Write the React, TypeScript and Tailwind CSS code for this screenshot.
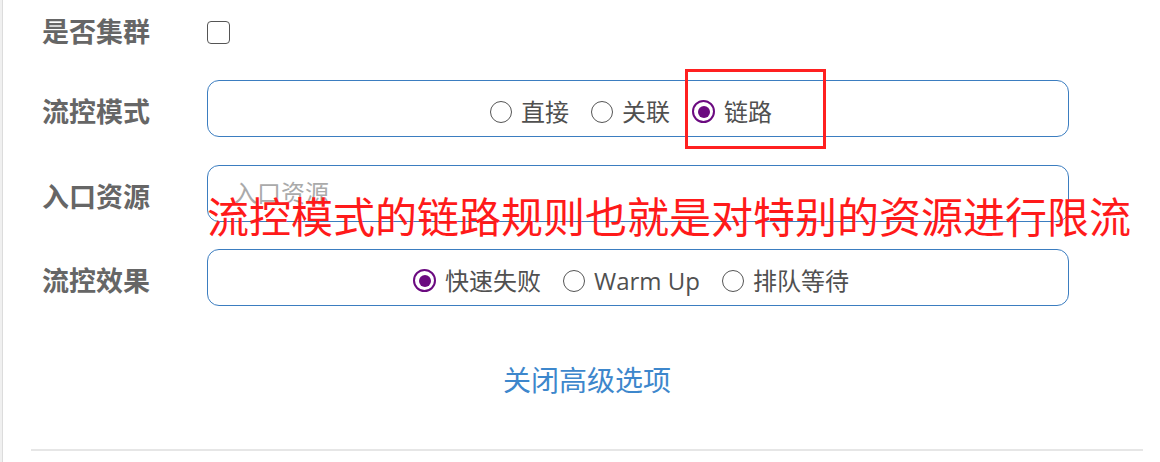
import { useState } from "react";

const font = "font-['Liberation_Sans','Noto_Sans_CJK_SC',sans-serif]";

type RadioProps = { label: string; checked: boolean; onSelect: () => void };

function Radio({ label, checked, onSelect }: RadioProps) {
  return (
    <label className="flex cursor-pointer items-center gap-[9px]" onClick={onSelect}>
      {checked ? (
        <span className="flex h-[23px] w-[23px] items-center justify-center rounded-full border-[2.5px] border-[#6b0a80]">
          <span className="h-[12px] w-[12px] rounded-full bg-[#6b0a80]" />
        </span>
      ) : (
        <span className="h-[22px] w-[22px] rounded-full border-[1.5px] border-[#555]" />
      )}
      <span className="font-['Open_Sans','Noto_Sans_CJK_SC',sans-serif] text-[24px] leading-none text-[#505050]">
        {label}
      </span>
    </label>
  );
}

function RadioBox({ options, initial }: { options: string[]; initial: number }) {
  const [value, setValue] = useState(initial);
  return (
    <div className="flex h-[57px] flex-1 items-center justify-center gap-[22px] rounded-[12px] border border-[#3b7dc0] pt-[6px] pr-[14px]">
      {options.map((opt, i) => (
        <Radio key={opt} label={opt} checked={value === i} onSelect={() => setValue(i)} />
      ))}
    </div>
  );
}

function Label({ children, first }: { children: string; first?: boolean }) {
  return (
    <div
      className={`w-[165px] shrink-0 text-[27px] leading-none font-bold text-[#666] ${first ? "pt-[3px]" : "pt-[9px]"}`}
    >
      {children}
    </div>
  );
}

export default function App() {
  return (
    <div className={`relative flex h-[462px] w-[1160px] overflow-hidden bg-white ${font}`}>
      <div className="w-[3px] shrink-0 border-r border-[#dcdcdc] bg-[#f0f0f0]" />

      <div className="flex flex-1 flex-col pl-[28px] pr-[17px] pt-[12px]">
        <div className="flex h-[40px] items-center pl-[11px]">
          <Label first>是否集群</Label>
          <span className="h-[23px] w-[23px] rounded-[4px] border-[1.5px] border-[#555]" />
        </div>

        <div className="mt-[28px] flex items-center pl-[11px] pr-[74px]">
          <Label>流控模式</Label>
          <RadioBox options={["直接", "关联", "链路"]} initial={2} />
        </div>

        <div className="mt-[28px] flex items-center pl-[11px] pr-[74px]">
          <Label>入口资源</Label>
          <div className="flex h-[57px] flex-1 items-center rounded-[12px] border border-[#3b7dc0] pl-[25px]">
            <span className="text-[24px] leading-none text-[#aaa]">入口资源</span>
          </div>
        </div>

        <div className="mt-[27px] flex items-center pl-[11px] pr-[74px]">
          <Label>流控效果</Label>
          <RadioBox options={["快速失败", "Warm Up", "排队等待"]} initial={0} />
        </div>

        <div className="mt-[62px] flex justify-center">
          <a href="#" className="text-[28px] leading-none text-[#3d87cc]">
            关闭高级选项
          </a>
        </div>

        <div className="mt-[53px] h-[2px] bg-[#e6e6e6]" />
      </div>

      <div className="pointer-events-none absolute left-[685px] top-[69px] h-[80px] w-[141px] border-[3px] border-[#ff2020]" />
      <div className="pointer-events-none absolute left-[207px] top-[194px] font-['Noto_Sans_CJK_SC',sans-serif] text-[42px] leading-[42px] whitespace-nowrap text-[#ff1a1a]">
        流控模式的链路规则也就是对特别的资源进行限流
      </div>
    </div>
  );
}
